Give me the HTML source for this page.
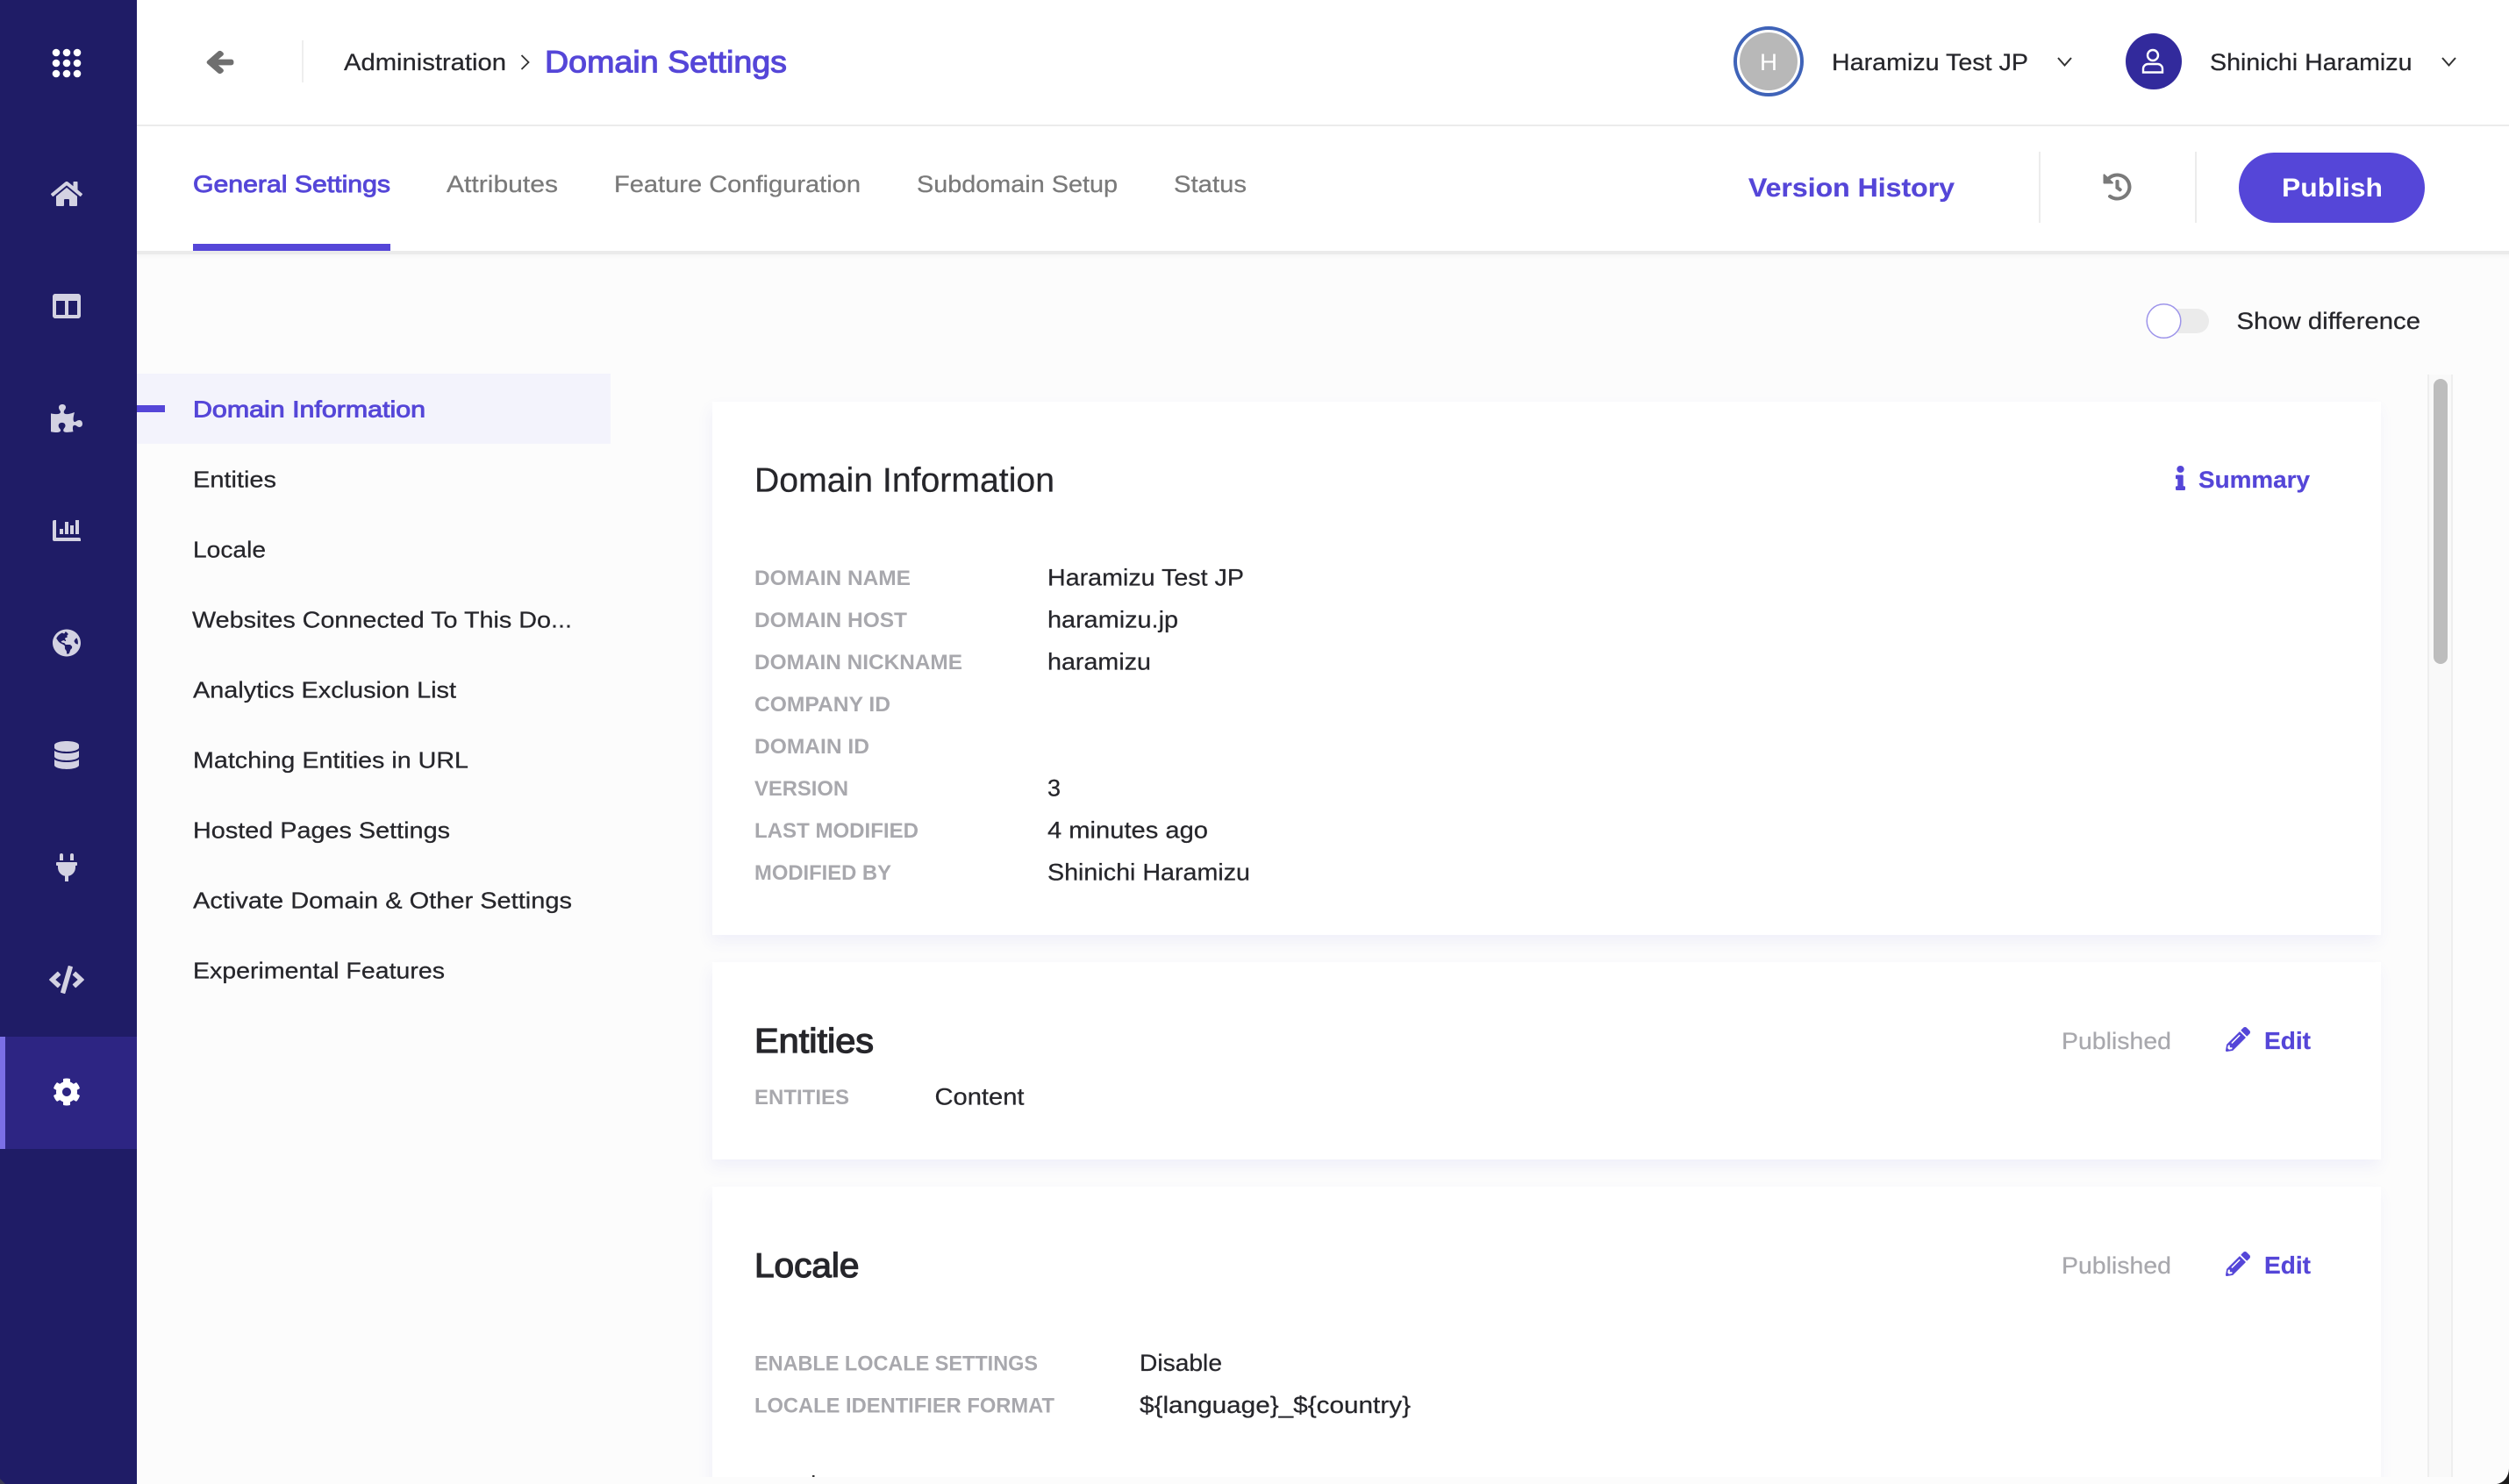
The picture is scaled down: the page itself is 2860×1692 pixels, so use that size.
<!DOCTYPE html>
<html lang="en">
<head>
<meta charset="utf-8">
<title>Domain Settings</title>
<style>
html,body{margin:0;padding:0;width:2860px;height:1692px;overflow:hidden;background:#fcfcfc}
.box{position:absolute}
#content{position:absolute;left:156px;top:290px;width:2704px;height:1394px;overflow:hidden;background:linear-gradient(#f6f6f6,#fcfcfc 6px)}
.card{position:absolute;left:656px;width:1902px;background:#fff;box-shadow:-2px 8px 16px rgba(85,85,216,.07)}
svg#ui{position:absolute;left:0;top:0}
text{font-family:"Liberation Sans",sans-serif;fill:#26262b;stroke:#26262b;stroke-width:.25px;transform:translateX(-1px)}
.n{font-size:26px}
.v{font-size:27px}
.l{font-size:24.5px;font-weight:700;fill:#a8a8ad;stroke:none}
.p{fill:#5546d8;stroke:#5546d8;stroke-width:.2px}
.m{stroke:#5546d8;stroke-width:.9px}
.g{fill:#7a7a7a;stroke:#7a7a7a}
.b{font-weight:700}
.w{fill:#fff;stroke:none}
.h{stroke-width:1.3px}
.u{fill:#a8a8ad;stroke:#a8a8ad}
</style>
</head>
<body>
<div class="box" style="left:156px;top:0;width:2704px;height:142px;background:#fff"></div>
<div class="box" style="left:156px;top:142px;width:2704px;height:2px;background:#ebebeb"></div>
<div class="box" style="left:156px;top:144px;width:2704px;height:142px;background:#fff"></div>
<div class="box" style="left:156px;top:286px;width:2704px;height:4px;background:#ebebeb"></div>
<div id="content">
  <div class="box" style="left:0;top:136px;width:540px;height:80px;background:#f3f3fc"></div>
  <div class="box" style="left:0;top:172px;width:32px;height:8px;background:#5546d8"></div>
  <div class="card" style="top:168px;height:608px"></div>
  <div class="card" style="top:807px;height:225px"></div>
  <div class="card" style="top:1063px;height:400px"></div>
  <div class="box" style="left:2611px;top:137px;width:25px;height:1257px;background:#f9f9f9;border-left:2px solid #eee;border-right:2px solid #eee"></div>
  <div class="box" style="left:2618px;top:142px;width:16px;height:325px;background:#bdbdbd;border-radius:8px"></div>
</div>
<div class="box" style="left:0;top:0;width:156px;height:1692px;background:#1f1c66"></div>
<div class="box" style="left:0;top:1182px;width:156px;height:128px;background:#2d2583"></div>
<div class="box" style="left:0;top:1182px;width:6px;height:128px;background:#7b6fe6"></div>
<svg id="ui" width="2860" height="1692" viewBox="0 0 2860 1692" xmlns="http://www.w3.org/2000/svg">
  <!-- sidebar icons -->
  <g fill="#fff">
    <circle cx="64" cy="60" r="4.300"/><circle cx="76" cy="60" r="4.300"/><circle cx="88" cy="60" r="4.300"/>
    <circle cx="64" cy="72" r="4.300"/><circle cx="76" cy="72" r="4.300"/><circle cx="88" cy="72" r="4.300"/>
    <circle cx="64" cy="84" r="4.300"/><circle cx="76" cy="84" r="4.300"/><circle cx="88" cy="84" r="4.300"/>
  </g>
  <g fill="#d3d2e2">
    <svg x="58" y="205" width="36" height="32" viewBox="0 0 576 512"><path d="M280.37 148.26L96 300.11V464a16 16 0 0 0 16 16l112.06-.29a16 16 0 0 0 15.92-16V368a16 16 0 0 1 16-16h64a16 16 0 0 1 16 16v95.64a16 16 0 0 0 16 16.05L464 480a16 16 0 0 0 16-16V300L295.67 148.26a12.19 12.19 0 0 0-15.3 0zM571.6 251.47L488 182.56V44.05a12 12 0 0 0-12-12h-56a12 12 0 0 0-12 12v72.61L318.47 43a48 48 0 0 0-61 0L4.34 251.47a12 12 0 0 0-1.6 16.9l25.5 31A12 12 0 0 0 45.15 301l235.22-193.74a12.19 12.19 0 0 1 15.3 0L530.9 301a12 12 0 0 0 16.9-1.6l25.5-31a12 12 0 0 0-1.7-16.93z"/></svg>
    <svg x="60" y="333" width="32" height="32" viewBox="0 0 512 512"><path d="M464 32H48C21.49 32 0 53.49 0 80v352c0 26.51 21.49 48 48 48h416c26.51 0 48-21.49 48-48V80c0-26.51-21.49-48-48-48zM224 416H64V160h160v256zm224 0H288V160h160v256z"/></svg>
    <svg x="58" y="461" width="36" height="32" viewBox="0 0 576 512"><path d="M519.442 288.651c-41.519 0-59.5 31.593-82.058 31.593C377.409 320.244 432 144 432 144s-196.288 80-196.288-3.297c0-35.827 36.288-46.25 36.288-85.985C272 19.216 243.885 0 210.539 0c-34.654 0-66.366 18.891-66.366 56.346 0 41.364 31.711 59.277 31.711 81.75C175.885 207.719 0 166.758 0 166.758v333.237s178.635 41.047 178.635-28.662c0-22.473-40-40.107-40-81.471 0-37.456 29.25-56.346 63.577-56.346 33.673 0 61.788 19.216 61.788 54.717 0 39.735-36.288 50.158-36.288 85.985 0 60.803 129.675 25.73 181.23 25.73 0 0-34.725-120.101 25.827-120.101 35.962 0 46.423 36.152 86.308 36.152C556.712 416 576 387.99 576 354.443c0-34.199-18.962-65.792-56.558-65.792z"/></svg>
    <path d="M60 595a2 2 0 0 1 2-2h2v20h26a2 2 0 0 1 2 2v2H62a2 2 0 0 1-2-2z"/>
    <rect x="68" y="603" width="4" height="6"/><rect x="74" y="595" width="4" height="14"/><rect x="80" y="599" width="4" height="10"/><rect x="86" y="593" width="4" height="16"/>
    <svg x="60" y="717" width="32" height="32" viewBox="0 0 496 512" preserveAspectRatio="none"><path d="M248 8C111.03 8 0 119.03 0 256s111.03 248 248 248 248-111.03 248-248S384.97 8 248 8zm82.29 357.6c-3.9 3.88-7.99 7.95-11.31 11.28-2.99 3-5.1 6.7-6.17 10.71-1.51 5.66-2.73 11.38-4.77 16.87l-17.39 46.85c-13.76 3-28 4.69-42.65 4.69v-27.38c1.69-12.62-7.64-36.26-22.63-51.25-6-6-9.37-14.14-9.37-22.63v-32.01c0-11.64-6.27-22.34-16.46-27.97-14.37-7.95-34.81-19.06-48.81-26.11-11.48-5.78-22.1-13.14-31.65-21.75l-.8-.72a114.792 114.792 0 0 1-18.06-20.74c-9.38-13.77-24.66-36.42-34.59-51.14 20.47-45.5 57.36-82.04 103.2-101.89l24.01 12.01C203.48 89.74 216 82.01 216 70.11v-11.3c7.99-1.29 16.12-2.11 24.39-2.42l28.3 28.3c6.25 6.25 6.25 16.38 0 22.63L264 112l-10.34 10.34c-3.12 3.12-3.12 8.19 0 11.31l4.69 4.69c3.12 3.12 3.12 8.19 0 11.31l-8 8a8.008 8.008 0 0 1-5.66 2.34h-8.99c-2.08 0-4.08.81-5.58 2.27l-9.92 9.65a8.008 8.008 0 0 0-1.58 9.31l15.59 31.19c2.66 5.32-1.21 11.58-7.15 11.58h-5.64c-1.93 0-3.79-.7-5.24-1.96l-9.28-8.06a16.017 16.017 0 0 0-15.55-3.1l-31.17 10.39a11.95 11.95 0 0 0-8.17 11.34c0 4.53 2.56 8.66 6.61 10.69l11.08 5.54c9.41 4.71 19.79 7.16 30.31 7.16s22.59 27.29 32 32h66.75c8.49 0 16.62 3.37 22.63 9.37l13.69 13.69a30.503 30.503 0 0 1 8.93 21.57 46.536 46.536 0 0 1-13.72 32.98zM417 274.25c-5.79-1.45-10.84-5-14.15-9.97l-17.98-26.97a23.97 23.97 0 0 1 0-26.62l19.59-29.38c2.32-3.47 5.5-6.29 9.24-8.15l12.98-6.49C440.2 193.59 448 223.87 448 256c0 8.67-.74 17.16-1.82 25.54L417 274.25z"/></svg>
    <svg x="62" y="845" width="28" height="32" viewBox="0 0 448 512"><path d="M448 73.143v45.714C448 159.143 347.667 192 224 192S0 159.143 0 118.857V73.143C0 32.857 100.333 0 224 0s224 32.857 224 73.143zM448 176v102.857C448 319.143 347.667 352 224 352S0 319.143 0 278.857V176c48.125 33.143 136.208 48.572 224 48.572S399.874 209.143 448 176zm0 160v102.857C448 479.143 347.667 512 224 512S0 479.143 0 438.857V336c48.125 33.143 136.208 48.572 224 48.572S399.874 369.143 448 336z"/></svg>
    <svg x="64" y="973" width="24" height="32" viewBox="0 0 384 512"><path d="M320,32a32,32,0,0,0-64,0v96h64Zm48,128H16A16,16,0,0,0,0,176v32a16,16,0,0,0,16,16H32v32A160.07,160.07,0,0,0,160,412.8V512h64V412.8A160.07,160.07,0,0,0,352,256V224h16a16,16,0,0,0,16-16V176A16,16,0,0,0,368,160ZM128,32a32,32,0,0,0-64,0v96h64Z"/></svg>
    <svg x="56" y="1101" width="40" height="32" viewBox="0 0 640 512"><path d="M278.9 511.5l-61-17.7c-6.4-1.8-10-8.5-8.2-14.9L346.2 8.7c1.8-6.4 8.5-10 14.9-8.2l61 17.7c6.4 1.8 10 8.5 8.2 14.9L293.8 503.3c-1.9 6.4-8.5 10.1-14.9 8.2zm-114-112.2l43.5-46.4c4.6-4.9 4.3-12.7-.8-17.2L117 256l90.6-79.7c5.1-4.5 5.5-12.3.8-17.2l-43.5-46.4c-4.5-4.8-12.1-5.1-17-.5L3.8 247.2c-5.1 4.7-5.1 12.8 0 17.5l144.1 135.1c4.9 4.6 12.5 4.4 17-.5zm327.2.6l144.1-135.1c5.1-4.7 5.1-12.8 0-17.5L492.1 112.1c-4.8-4.5-12.4-4.3-17 .5L431.6 159c-4.6 4.9-4.3 12.7.8 17.2L523 256l-90.6 79.7c-5.1 4.5-5.5 12.3-.8 17.2l43.5 46.4c4.5 4.9 12.1 5.1 17 .6z"/></svg>
  </g>
  <svg x="60" y="1229" width="32" height="32" viewBox="0 0 512 512" fill="#fff"><path d="M487.4 315.7l-42.6-24.6c4.3-23.2 4.3-47 0-70.2l42.6-24.6c4.9-2.8 7.1-8.6 5.5-14-11.1-35.6-30-67.8-54.7-94.6-3.8-4.1-10-5.1-14.8-2.3L380.8 110c-17.9-15.4-38.5-27.3-60.8-35.1V25.8c0-5.6-3.9-10.5-9.4-11.7-36.7-8.2-74.3-7.8-109.2 0-5.5 1.2-9.4 6.1-9.4 11.7V75c-22.2 7.9-42.8 19.8-60.8 35.1L88.7 85.5c-4.9-2.8-11-1.9-14.8 2.3-24.7 26.7-43.6 58.9-54.7 94.6-1.7 5.4.6 11.2 5.5 14L67.3 221c-4.3 23.2-4.3 47 0 70.2l-42.6 24.6c-4.9 2.8-7.1 8.6-5.5 14 11.1 35.6 30 67.8 54.7 94.6 3.8 4.1 10 5.1 14.8 2.3l42.6-24.6c17.9 15.4 38.5 27.3 60.8 35.1v49.2c0 5.6 3.9 10.5 9.4 11.7 36.7 8.2 74.3 7.8 109.2 0 5.5-1.2 9.4-6.1 9.4-11.7v-49.2c22.2-7.9 42.8-19.8 60.8-35.1l42.6 24.6c4.9 2.8 11 1.9 14.8-2.3 24.7-26.7 43.6-58.9 54.7-94.6 1.5-5.5-.7-11.3-5.6-14.1zM256 336c-44.1 0-80-35.9-80-80s35.9-80 80-80 80 35.9 80 80-35.9 80-80 80z"/></svg>

  <!-- header -->
  <svg x="237" y="57" width="28" height="28" viewBox="0 0 448 512" fill="#6f6f6f" stroke="#6f6f6f" stroke-width="44" preserveAspectRatio="none" overflow="visible"><path d="M257.5 445.1l-22.2 22.2c-9.4 9.4-24.6 9.4-33.9 0L7 273c-9.4-9.4-9.4-24.6 0-33.9L201.4 44.7c9.4-9.4 24.6-9.4 33.9 0l22.2 22.2c9.5 9.5 9.3 25-.4 34.3L136.6 216H424c13.3 0 24 10.7 24 24v32c0 13.3-10.7 24-24 24H136.6l120.5 114.8c9.8 9.3 10 24.8.4 34.3z"/></svg>
  <rect x="344" y="46" width="2" height="48" fill="#eee"/>
  <text class="v" x="393" y="80" textLength="185" lengthAdjust="spacingAndGlyphs">Administration</text>
  <polyline points="594.500,63 602.500,71 594.500,79" fill="none" stroke="#333" stroke-width="1.8"/>
  <text class="p m" x="622" y="82.5" font-size="35" style="stroke-width:1.1px" textLength="276" lengthAdjust="spacingAndGlyphs">Domain Settings</text>

  <circle cx="2016" cy="70" r="38" fill="#fff" stroke="#3f63b8" stroke-width="4"/>
  <circle cx="2016" cy="70" r="33" fill="#b8b8b8"/>
  <text class="w" x="2007" y="80" font-size="27" textLength="20" lengthAdjust="spacingAndGlyphs">H</text>
  <text class="v" x="2089" y="80" textLength="224" lengthAdjust="spacingAndGlyphs">Haramizu Test JP</text>
  <polyline points="2346,66 2353.5,74.5 2361,66" fill="none" stroke="#333" stroke-width="2"/>
  <circle cx="2455" cy="70" r="32" fill="#322a9c"/>
  <circle cx="2454" cy="63" r="6" fill="none" stroke="#fff" stroke-width="2.4"/>
  <path d="M2443 82.5v-4a5.500 5.500 0 0 1 5.500-5.500h11a5.500 5.500 0 0 1 5.500 5.500v4z" fill="none" stroke="#fff" stroke-width="2.4"/>
  <text class="v" x="2520" y="80" textLength="230.500" lengthAdjust="spacingAndGlyphs">Shinichi Haramizu</text>
  <polyline points="2784,66 2791.5,74.5 2799,66" fill="none" stroke="#333" stroke-width="2"/>

  <!-- tabs -->
  <text class="p m" x="221" y="219" font-size="27" textLength="225" lengthAdjust="spacingAndGlyphs">General Settings</text>
  <rect x="220" y="278" width="225" height="8" fill="#5546d8"/>
  <text class="g" x="510" y="219" font-size="27" textLength="127" lengthAdjust="spacingAndGlyphs">Attributes</text>
  <text class="g" x="701" y="219" font-size="27" textLength="281" lengthAdjust="spacingAndGlyphs">Feature Configuration</text>
  <text class="g" x="1046" y="219" font-size="27" textLength="229" lengthAdjust="spacingAndGlyphs">Subdomain Setup</text>
  <text class="g" x="1339" y="219" font-size="27" textLength="83" lengthAdjust="spacingAndGlyphs">Status</text>
  <text class="p b" x="1994" y="224" font-size="30" textLength="235" lengthAdjust="spacingAndGlyphs">Version History</text>
  <rect x="2324" y="173" width="2" height="81" fill="#ececec"/>
  <svg x="2397" y="197" width="33" height="32" viewBox="0 0 512 512" fill="#7a7a7a" preserveAspectRatio="none"><path d="M504 255.531c.253 136.64-111.18 248.372-247.82 248.468-59.015.042-113.223-20.53-155.822-54.911-11.077-8.94-11.905-25.541-1.839-35.607l11.267-11.267c8.609-8.609 22.353-9.551 31.891-1.984C173.062 425.135 212.781 440 256 440c101.705 0 184-82.311 184-184 0-101.705-82.311-184-184-184-48.814 0-93.149 18.969-126.068 49.932l50.754 50.754c10.08 10.08 2.941 27.314-11.313 27.314H24c-8.837 0-16-7.163-16-16V38.627c0-14.254 17.234-21.393 27.314-11.314l49.372 49.372C129.209 34.136 189.552 8 256 8c136.81 0 247.747 110.78 248 247.531zm-180.912 78.784l9.823-12.63c8.138-10.463 6.253-25.542-4.21-33.679L288 256.349V152c0-13.255-10.745-24-24-24h-16c-13.255 0-24 10.745-24 24v135.651l65.409 50.874c10.463 8.137 25.541 6.253 33.679-4.21z"/></svg>
  <rect x="2502" y="173" width="2" height="81" fill="#ececec"/>
  <rect x="2552" y="174" width="212" height="80" rx="40" fill="#5546d8"/>
  <text class="b w" x="2602" y="224" font-size="30" textLength="115" lengthAdjust="spacingAndGlyphs">Publish</text>

  <!-- toggle -->
  <rect x="2470" y="352" width="48" height="28" rx="14" fill="#ebebeb"/>
  <circle cx="2466.500" cy="366" r="19.300" fill="#fff" stroke="#9d94ea" stroke-width="1.500"/>
  <text class="v" x="2550.500" y="375" textLength="209.500" lengthAdjust="spacingAndGlyphs">Show difference</text>

  <!-- left nav -->
  <text class="n p m" x="221" y="475.500" textLength="265" lengthAdjust="spacingAndGlyphs">Domain Information</text>
  <text class="n" x="221" y="555.500" textLength="95" lengthAdjust="spacingAndGlyphs">Entities</text>
  <text class="n" x="221" y="635.500" textLength="83" lengthAdjust="spacingAndGlyphs">Locale</text>
  <text class="n" x="220" y="715.500" textLength="433" lengthAdjust="spacingAndGlyphs">Websites Connected To This Do...</text>
  <text class="n" x="221" y="795.500" textLength="300" lengthAdjust="spacingAndGlyphs">Analytics Exclusion List</text>
  <text class="n" x="221" y="875.500" textLength="314" lengthAdjust="spacingAndGlyphs">Matching Entities in URL</text>
  <text class="n" x="221" y="955.500" textLength="293" lengthAdjust="spacingAndGlyphs">Hosted Pages Settings</text>
  <text class="n" x="221" y="1035.500" textLength="432" lengthAdjust="spacingAndGlyphs">Activate Domain &amp; Other Settings</text>
  <text class="n" x="221" y="1115.500" textLength="287" lengthAdjust="spacingAndGlyphs">Experimental Features</text>

  <!-- card 1 -->
  <text x="861" y="560.500" font-size="39" textLength="342" lengthAdjust="spacingAndGlyphs">Domain Information</text>
  <svg x="2480" y="531" width="11" height="28" viewBox="0 0 192 512" fill="#5546d8" preserveAspectRatio="none"><path d="M20 424.229h20V279.771H20c-11.046 0-20-8.954-20-20V212c0-11.046 8.954-20 20-20h112c11.046 0 20 8.954 20 20v212.229h20c11.046 0 20 8.954 20 20V492c0 11.046-8.954 20-20 20H20c-11.046 0-20-8.954-20-20v-47.771c0-11.046 8.954-20 20-20zM96 0C56.235 0 24 32.235 24 72s32.235 72 72 72 72-32.235 72-72S135.764 0 96 0z"/></svg>
  <text class="p b" x="2507" y="556" font-size="27" textLength="127" lengthAdjust="spacingAndGlyphs">Summary</text>

  <text class="l" x="861" y="667" textLength="178" lengthAdjust="spacingAndGlyphs">DOMAIN NAME</text>
  <text class="l" x="861" y="715" textLength="174" lengthAdjust="spacingAndGlyphs">DOMAIN HOST</text>
  <text class="l" x="861" y="763" textLength="237" lengthAdjust="spacingAndGlyphs">DOMAIN NICKNAME</text>
  <text class="l" x="861" y="811" textLength="155" lengthAdjust="spacingAndGlyphs">COMPANY ID</text>
  <text class="l" x="861" y="859" textLength="131" lengthAdjust="spacingAndGlyphs">DOMAIN ID</text>
  <text class="l" x="861" y="907" textLength="107" lengthAdjust="spacingAndGlyphs">VERSION</text>
  <text class="l" x="861" y="955" textLength="187" lengthAdjust="spacingAndGlyphs">LAST MODIFIED</text>
  <text class="l" x="861" y="1003" textLength="156" lengthAdjust="spacingAndGlyphs">MODIFIED BY</text>

  <text class="v" x="1195" y="667.500" textLength="224" lengthAdjust="spacingAndGlyphs">Haramizu Test JP</text>
  <text class="v" x="1195" y="715.500" textLength="149" lengthAdjust="spacingAndGlyphs">haramizu.jp</text>
  <text class="v" x="1195" y="763.500" textLength="118" lengthAdjust="spacingAndGlyphs">haramizu</text>
  <text class="v" x="1195" y="907.500" textLength="15" lengthAdjust="spacingAndGlyphs">3</text>
  <text class="v" x="1195" y="955.500" textLength="183" lengthAdjust="spacingAndGlyphs">4 minutes ago</text>
  <text class="v" x="1195" y="1003.500" textLength="231" lengthAdjust="spacingAndGlyphs">Shinichi Haramizu</text>

  <!-- card 2 -->
  <text class="h" x="861" y="1200" font-size="39" textLength="136" lengthAdjust="spacingAndGlyphs">Entities</text>
  <text class="l" x="861" y="1259" textLength="108" lengthAdjust="spacingAndGlyphs">ENTITIES</text>
  <text class="v" x="1066.500" y="1259.500" textLength="102" lengthAdjust="spacingAndGlyphs">Content</text>
  <text class="u" x="2351" y="1196" font-size="27" textLength="125" lengthAdjust="spacingAndGlyphs">Published</text>
  <svg x="2537" y="1171" width="28" height="28" viewBox="0 0 512 512" fill="#5546d8"><path d="M497.9 142.1l-46.1 46.1c-4.7 4.7-12.3 4.7-17 0l-111-111c-4.7-4.7-4.7-12.3 0-17l46.1-46.1c18.7-18.7 49.1-18.7 67.9 0l60.1 60.1c18.8 18.7 18.8 49.1 0 67.9zM284.2 99.8L21.6 362.4.4 483.9c-2.9 16.4 11.4 30.6 27.8 27.8l121.5-21.3 262.6-262.6c4.7-4.7 4.7-12.3 0-17l-111-111c-4.8-4.7-12.4-4.7-17.1 0zM124.1 339.9c-5.5-5.5-5.5-14.3 0-19.8l154-154c5.5-5.5 14.3-5.5 19.8 0s5.5 14.3 0 19.8l-154 154c-5.5 5.5-14.3 5.5-19.8 0zM88 424h48v36.3l-64.5 11.3-31.1-31.1L51.7 376H88v48z"/></svg>
  <text class="p b" x="2582" y="1196" font-size="28" textLength="53" lengthAdjust="spacingAndGlyphs">Edit</text>

  <!-- card 3 -->
  <text class="h" x="861" y="1456" font-size="39" textLength="119.500" lengthAdjust="spacingAndGlyphs">Locale</text>
  <text class="u" x="2351" y="1452" font-size="27" textLength="125" lengthAdjust="spacingAndGlyphs">Published</text>
  <svg x="2537" y="1427" width="28" height="28" viewBox="0 0 512 512" fill="#5546d8"><path d="M497.9 142.1l-46.1 46.1c-4.7 4.7-12.3 4.7-17 0l-111-111c-4.7-4.7-4.7-12.3 0-17l46.1-46.1c18.7-18.7 49.1-18.7 67.9 0l60.1 60.1c18.8 18.7 18.8 49.1 0 67.9zM284.2 99.8L21.6 362.4.4 483.9c-2.9 16.4 11.4 30.6 27.8 27.8l121.5-21.3 262.6-262.6c4.7-4.7 4.7-12.3 0-17l-111-111c-4.8-4.7-12.4-4.7-17.1 0zM124.1 339.9c-5.5-5.5-5.5-14.3 0-19.8l154-154c5.5-5.5 14.3-5.5 19.8 0s5.5 14.3 0 19.8l-154 154c-5.5 5.5-14.3 5.5-19.8 0zM88 424h48v36.3l-64.5 11.3-31.1-31.1L51.7 376H88v48z"/></svg>
  <text class="p b" x="2582" y="1452" font-size="28" textLength="53" lengthAdjust="spacingAndGlyphs">Edit</text>
  <text class="l" x="861" y="1562.500" textLength="323" lengthAdjust="spacingAndGlyphs">ENABLE LOCALE SETTINGS</text>
  <text class="l" x="861" y="1610.500" textLength="342" lengthAdjust="spacingAndGlyphs">LOCALE IDENTIFIER FORMAT</text>
  <text class="v" x="1300" y="1563" textLength="94" lengthAdjust="spacingAndGlyphs">Disable</text>
  <text class="v" x="1300" y="1611" textLength="309" lengthAdjust="spacingAndGlyphs">${language}_${country}</text>
  <rect x="926" y="1682" width="2.500" height="2" fill="#333"/>

  <!-- window corners -->
  <path d="M2860 1674V1692H2846A16 18 0 0 0 2860 1674z" fill="#1c1c1c"/>
  <path d="M0 1686L6 1692H0z" fill="#3a3a55"/>
</svg>
</body>
</html>
